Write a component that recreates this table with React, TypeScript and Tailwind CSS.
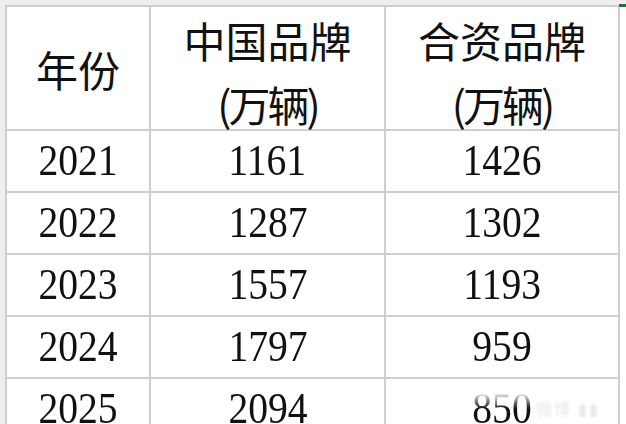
const rows = [
  { year: '2021', cn: '1161', jv: '1426' },
  { year: '2022', cn: '1287', jv: '1302' },
  { year: '2023', cn: '1557', jv: '1193' },
  { year: '2024', cn: '1797', jv: '959' },
  { year: '2025', cn: '2094', jv: '850' },
]

const cjk = "font-['Noto_Sans_CJK_SC',sans-serif]"
const num = "font-['Liberation_Serif',serif]"

export default function App() {
  return (
    <div className="relative w-[626px] h-[424px] overflow-hidden bg-white text-[#111]">
      <div className="h-[5px] bg-[#eeeeee]" />
      <div className="flex">
        <div className="w-[5px] shrink-0 bg-[#eeeeee]" />
        <div className="grid grid-cols-[142px_233px_232px] grid-rows-[122px_60px_60px_60px_60px_60px] gap-[2px] p-[2px] bg-[#cecece]">
          <div className={`bg-white flex items-center justify-center text-[42px] ${cjk}`}>年份</div>
          <div className={`bg-white pt-px text-center text-[42px] leading-[64px] ${cjk}`}>
            <div>中国品牌</div>
            <div className="tracking-[-3px]">(万辆)</div>
          </div>
          <div className={`bg-white pt-px text-center text-[42px] leading-[64px] ${cjk}`}>
            <div>合资品牌</div>
            <div className="tracking-[-3px]">(万辆)</div>
          </div>
          {rows.map((r, i) => (
            <div key={r.year} className="contents">
              <div className={`bg-white flex items-center justify-center text-[44px] ${num}`}>
                <span className="scale-x-[0.9]">{r.year}</span>
              </div>
              <div className={`bg-white flex items-center justify-center text-[44px] ${num}`}>
                <span className="scale-x-[0.9]">{r.cn}</span>
              </div>
              <div className={`relative bg-white flex items-center justify-center text-[44px] ${num}`}>
                <span className="scale-x-[0.9]">{r.jv}</span>
                {i === 4 && (
                  <div className="absolute inset-0 flex items-start">
                    <div className="h-[30px] w-full bg-gradient-to-b from-white via-white/90 to-white/0" />
                  </div>
                )}
              </div>
            </div>
          ))}
        </div>
      </div>
      <div className="absolute right-0 top-[4px] w-[7px] h-[3px] bg-[#217346]" />
      <div className={`absolute left-[536px] top-[398px] w-[80px] h-[20px] bg-white/90 blur-[1px] text-[16px] leading-[20px] text-[#e8e8e8] tracking-[2px] ${cjk}`}>
        微博 ▮▮
      </div>
    </div>
  )
}
